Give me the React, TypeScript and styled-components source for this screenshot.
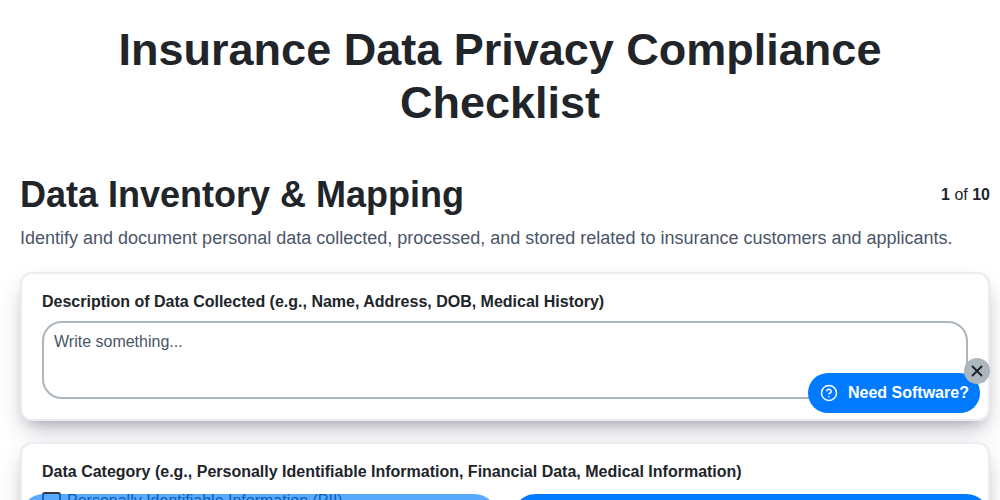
import { createGlobalStyle } from 'styled-components';
import styled from 'styled-components';
import { CircleHelp, X } from 'lucide-react';

const GlobalStyle = createGlobalStyle`
  html, body {
    margin: 0;
    height: 500px;
    overflow: hidden;
    background: #fff;
    font-family: "Liberation Sans", Arial, sans-serif;
    color: #212529;
  }
  * { box-sizing: border-box; }
`;

const Page = styled.div`
  height: 500px;
  overflow: hidden;
  padding: 23px 10px 0 20px;
`;

const Title = styled.h1`
  margin: 0 10px 44px 0;
  padding: 0 80px;
  font-size: 45px;
  line-height: 53px;
  font-weight: 700;
  text-align: center;
`;

const StepHeader = styled.div`
  display: flex;
  justify-content: space-between;
  align-items: center;
  margin-bottom: 9px;
`;

const StepTitle = styled.h2`
  margin: 0;
  font-size: 36px;
  line-height: 43px;
  font-weight: 700;
`;

const StepCount = styled.div`
  font-size: 16px;
  line-height: 24px;
`;

const StepText = styled.p`
  margin: 0 0 20px;
  font-size: 18px;
  line-height: 27px;
  color: #4a5568;
`;

const Card = styled.section`
  background: #fff;
  border: 2px solid #ebebf2;
  border-radius: 12px;
  box-shadow: 0 13px 27px -5px rgba(50, 50, 93, 0.25), 0 8px 16px -8px rgba(0, 0, 0, 0.3);
  padding: 18px 20px 20px;
  margin-bottom: 21px;
`;

const Label = styled.label`
  display: block;
  font-size: 16px;
  line-height: 20px;
  font-weight: 700;
  margin-bottom: 9px;
`;

const TextArea = styled.textarea`
  display: block;
  width: 100%;
  height: 78px;
  padding: 9px 10px;
  border: 2px solid #adb5bd;
  border-radius: 20px;
  font-family: inherit;
  font-size: 16px;
  line-height: 20px;
  resize: none;
  outline: none;
  &::placeholder { color: #4a5568; opacity: 1; }
`;

const Option = styled.div`
  display: flex;
  align-items: center;
  gap: 6px;
  color: #212529;
  font-size: 16px;
  line-height: 20px;
`;

const Box = styled.span`
  width: 19px;
  height: 19px;
  border: 2px solid #343a40;
  border-radius: 3px;
  background: #fff;
`;

const Footer = styled.div`
  position: fixed;
  left: 20px;
  right: 10px;
  top: 494px;
  display: flex;
  gap: 14px;
`;

const NavButton = styled.button<{ $off?: boolean }>`
  flex: 1;
  height: 48px;
  border: 0;
  border-radius: 24px;
  background: #007bff;
  opacity: ${(p) => (p.$off ? 0.65 : 1)};
`;

const Promo = styled.button`
  position: fixed;
  left: 808px;
  top: 373px;
  width: 172px;
  height: 40px;
  display: flex;
  align-items: center;
  gap: 10px;
  padding: 0 0 0 12px;
  border: 0;
  border-radius: 20px;
  background: #007bff;
  color: #fff;
  font-family: inherit;
  font-size: 16px;
  font-weight: 700;
`;

const Close = styled.span`
  position: fixed;
  left: 964px;
  top: 358px;
  width: 26px;
  height: 26px;
  display: flex;
  align-items: center;
  justify-content: center;
  border-radius: 50%;
  background: #adb5bd;
  color: #212529;
`;

export default function App() {
  return (
    <Page>
      <GlobalStyle />
      <Title>Insurance Data Privacy Compliance Checklist</Title>
      <StepHeader>
        <StepTitle>Data Inventory &amp; Mapping</StepTitle>
        <StepCount>
          <b>1</b> of <b>10</b>
        </StepCount>
      </StepHeader>
      <StepText>
        Identify and document personal data collected, processed, and stored related to insurance customers and applicants.
      </StepText>
      <Card>
        <Label>Description of Data Collected (e.g., Name, Address, DOB, Medical History)</Label>
        <TextArea placeholder="Write something..." />
      </Card>
      <Card>
        <Label>Data Category (e.g., Personally Identifiable Information, Financial Data, Medical Information)</Label>
        <Option>
          <Box />
          Personally Identifiable Information (PII)
        </Option>
      </Card>
      <Footer>
        <NavButton $off />
        <NavButton />
      </Footer>
      <Promo>
        <CircleHelp size={18} strokeWidth={2} />
        Need Software?
      </Promo>
      <Close>
        <X size={18} strokeWidth={2.5} />
      </Close>
    </Page>
  );
}
